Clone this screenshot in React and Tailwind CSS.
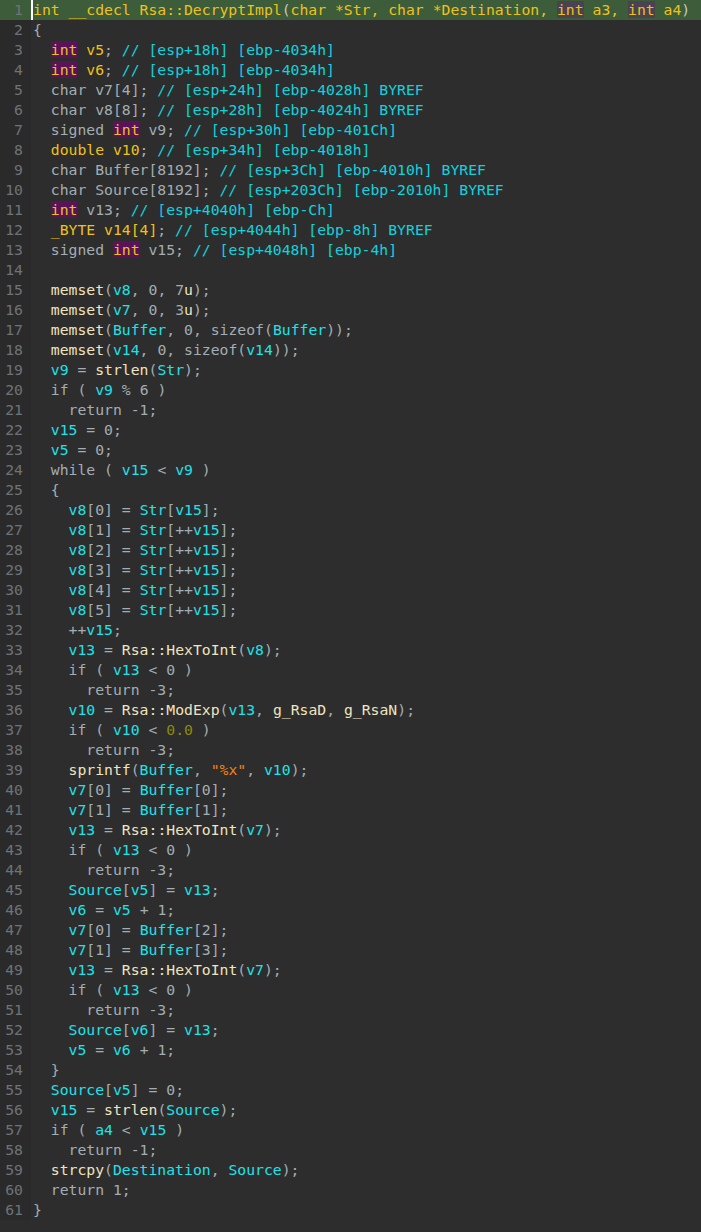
import React from "react";

const VARS = new Set(["v5", "v6", "v7", "v8", "v9", "v10", "v13", "v14", "v15", "Str", "Destination", "Buffer", "Source", "a3", "a4"]);
const KEYWORDS = new Set(["if", "while", "return", "sizeof"]);

const colorClass = {
  gray: "text-[#a3adb3]",
  var: "text-[#1fe2ea]",
  fn: "text-[#efe4c0]",
  cmt: "text-[#0fd3df]",
  yel: "text-[#eec21a]",
  olive: "text-[#8d8a0c]",
  str: "text-[#f2820f]",
};

// simple tokenizer for the body lines
const tokenize = (line) => {
  const re = /("[^"]*")|(\d+\.\d+)|([A-Za-z_][A-Za-z0-9_]*(?:::[A-Za-z_][A-Za-z0-9_]*)*)|(\s+)|([^\sA-Za-z_"]+)/g;
  const out = [];
  let m;
  while ((m = re.exec(line))) {
    if (m[1]) out.push([m[1], "str"]);
    else if (m[2]) out.push([m[2], "olive"]);
    else if (m[3]) {
      if (VARS.has(m[3])) out.push([m[3], "var"]);
      else if (KEYWORDS.has(m[3])) out.push([m[3], "gray"]);
      else out.push([m[3], "fn"]);
    } else if (m[4]) out.push([m[4], "gray"]);
    else out.push([m[5], "gray"]);
  }
  return out;
};

const INT = ["int", "int"];

const decls = [
  [["  ", "gray"], INT, [" ", "gray"], ["v5", "yel"], [";", "gray"], [" // [esp+18h] [ebp-4034h]", "cmt"]],
  [["  ", "gray"], INT, [" ", "gray"], ["v6", "yel"], [";", "gray"], [" // [esp+18h] [ebp-4034h]", "cmt"]],
  [["  char v7[4];", "gray"], [" // [esp+24h] [ebp-4028h] BYREF", "cmt"]],
  [["  char v8[8];", "gray"], [" // [esp+28h] [ebp-4024h] BYREF", "cmt"]],
  [["  signed ", "gray"], INT, [" v9;", "gray"], [" // [esp+30h] [ebp-401Ch]", "cmt"]],
  [["  ", "gray"], ["double v10", "yel"], [";", "gray"], [" // [esp+34h] [ebp-4018h]", "cmt"]],
  [["  char Buffer[8192];", "gray"], [" // [esp+3Ch] [ebp-4010h] BYREF", "cmt"]],
  [["  char Source[8192];", "gray"], [" // [esp+203Ch] [ebp-2010h] BYREF", "cmt"]],
  [["  ", "gray"], INT, [" v13;", "gray"], [" // [esp+4040h] [ebp-Ch]", "cmt"]],
  [["  ", "gray"], ["_BYTE v14[4]", "yel"], [";", "gray"], [" // [esp+4044h] [ebp-8h] BYREF", "cmt"]],
  [["  signed ", "gray"], INT, [" v15;", "gray"], [" // [esp+4048h] [ebp-4h]", "cmt"]],
];

const body = [
  "",
  "  memset(v8, 0, 7u);",
  "  memset(v7, 0, 3u);",
  "  memset(Buffer, 0, sizeof(Buffer));",
  "  memset(v14, 0, sizeof(v14));",
  "  v9 = strlen(Str);",
  "  if ( v9 % 6 )",
  "    return -1;",
  "  v15 = 0;",
  "  v5 = 0;",
  "  while ( v15 < v9 )",
  "  {",
  "    v8[0] = Str[v15];",
  "    v8[1] = Str[++v15];",
  "    v8[2] = Str[++v15];",
  "    v8[3] = Str[++v15];",
  "    v8[4] = Str[++v15];",
  "    v8[5] = Str[++v15];",
  "    ++v15;",
  "    v13 = Rsa::HexToInt(v8);",
  "    if ( v13 < 0 )",
  "      return -3;",
  "    v10 = Rsa::ModExp(v13, g_RsaD, g_RsaN);",
  "    if ( v10 < 0.0 )",
  "      return -3;",
  '    sprintf(Buffer, "%x", v10);',
  "    v7[0] = Buffer[0];",
  "    v7[1] = Buffer[1];",
  "    v13 = Rsa::HexToInt(v7);",
  "    if ( v13 < 0 )",
  "      return -3;",
  "    Source[v5] = v13;",
  "    v6 = v5 + 1;",
  "    v7[0] = Buffer[2];",
  "    v7[1] = Buffer[3];",
  "    v13 = Rsa::HexToInt(v7);",
  "    if ( v13 < 0 )",
  "      return -3;",
  "    Source[v6] = v13;",
  "    v5 = v6 + 1;",
  "  }",
  "  Source[v5] = 0;",
  "  v15 = strlen(Source);",
  "  if ( a4 < v15 )",
  "    return -1;",
  "  strcpy(Destination, Source);",
  "  return 1;",
  "}",
];

const Seg = ({ seg }) => {
  if (seg[1] === "int") {
    return <span className="bg-[#5a1258] text-[#eec21a]">int</span>;
  }
  return <span className={colorClass[seg[1]]}>{seg[0]}</span>;
};

const Row = ({ num, children, active }) => (
  <div className={`flex h-[20px] leading-[20px] ${active ? "bg-[#3c5c3a]" : ""}`}>
    <div className={`w-[31px] shrink-0 pr-[8px] text-right text-[#6f7377] ${active ? "" : "bg-[#2a2a2a]"}`}>{num}</div>
    <div className="relative pl-[2px] whitespace-pre">{children}</div>
  </div>
);

const App = () => {
  const lines = [
    [["{", "gray"]],
    ...decls,
    ...body.map(tokenize),
  ];

  return (
    <div className="w-[701px] h-[1232px] bg-[#2d2d2d] overflow-hidden text-[14.75px]" style={{ fontFamily: '"DejaVu Sans Mono", "Liberation Mono", monospace' }}>
      <Row num={1} active>
        <span className="absolute left-0 top-0 h-[20px] w-[2px] bg-white"></span>
        <span className="text-[#eec21a]">int __cdecl Rsa::DecryptImpl</span>
        <span className="text-[#c8c8b8]">(</span>
        <span className="text-[#eec21a]">char *Str, char *Destination, </span>
        <span className="bg-[#4b4150] text-[#eec21a]">int</span>
        <span className="text-[#eec21a]"> a3, </span>
        <span className="bg-[#4b4150] text-[#eec21a]">int</span>
        <span className="text-[#eec21a]"> a4</span>
        <span className="text-[#c8c8b8]">)</span>
      </Row>
      {lines.map((segs, i) => (
        <Row key={i} num={i + 2}>
          {segs.map((s, j) => (
            <Seg key={j} seg={s} />
          ))}
        </Row>
      ))}
    </div>
  );
};

export default App;
